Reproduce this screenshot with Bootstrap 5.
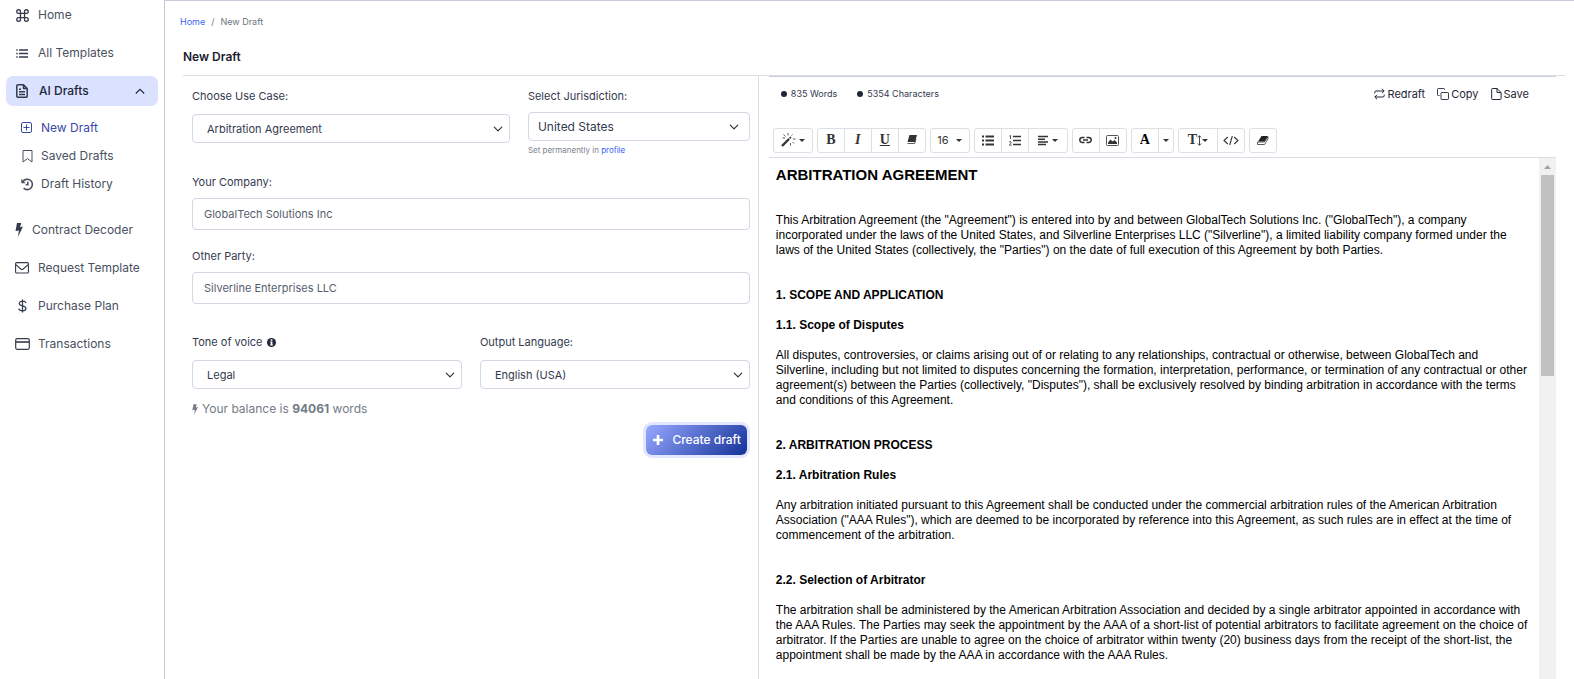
<!DOCTYPE html>
<html lang="en">
<head>
<meta charset="utf-8">
<meta name="viewport" content="width=device-width, initial-scale=1">
<title>New Draft</title>
<link href="https://cdn.jsdelivr.net/npm/bootstrap@5.3.0/dist/css/bootstrap.min.css" rel="stylesheet">
<style>
  :root { --line: #d3d7e2; --ink: #343a4f; --edge: #c6cbd8; }
  body { font-family: Inter, "Liberation Sans", sans-serif; font-size: 12px; line-height: 16px; color: var(--ink); background: #fff; }
  a { text-decoration: none; }
  svg { display: block; flex: none; }

  .side { width: 164px; flex: none; }
  .side a { color: #4a5060; font-size: 12px; line-height: 18px; height: 30px; padding: 0 9px; gap: 9px; border-radius: 7px; margin: 0 6px 8px; }
  .side a.current { background: #dbe2ff; color: #22263a; font-weight: 500; gap: 10px; }
  .side .sub { padding: 4px 0 13px; }
  .side .sub a { height: 20px; padding-left: 15px; gap: 8px; }
  .side .sub a.here { color: #3a49a8; }
  .side .glyph { width: 14px; display: flex; justify-content: center; color: #343b4d; }
  .side .sub .glyph { width: 12px; color: inherit; }
  .side .glyph.slim { width: 8px; }

  .work { border-left: 1px solid var(--edge); border-top: 1px solid var(--edge); padding: 0 9px 0 18px; min-width: 0; }
  .crumbs { font-size: 9px; line-height: 14px; padding-top: 14px; margin: 0 0 20px -3px; --bs-breadcrumb-item-padding-x: 6px; --bs-breadcrumb-divider-color: #6c757d; }
  .crumbs .breadcrumb-item.active { color: #6c757d; }
  .crumbs a, .tip a { color: #3d63f5; }
  .title { font-size: 12px; font-weight: 600; line-height: 16px; color: #1c2030; margin: 0 0 10px; }
  .panes { border-top: 1px solid #dcdee5; --bs-gutter-x: 0; min-height: 0; }
  .form-pane { border-right: 1px solid #dcdee5; padding: 12px 8px 0 9px; }
  .form-pane .row { --bs-gutter-x: 18px; }
  .form-pane label { font-size: 11px; line-height: 16px; margin-bottom: 8px; display: block; }
  .form-pane .roomy label { margin-bottom: 10px; }
  .form-pane .form-control { font-size: 11px; line-height: 16px; height: 32px; padding: 0 11px; border-color: var(--line); border-radius: 4px; color: #56606c; }
  .form-pane .form-select { font-size: 11px; line-height: 16px; height: 29px; padding: 0 30px 0 14px; border-color: var(--line); border-radius: 4px; color: var(--ink); background-size: 10px 10px; background-position: right 6px center; }
  .form-pane .wide-text { font-size: 12px; padding-left: 9px; background-position: right 10px center; }
  .field { padding-top: 18px; }
  .options { padding-top: 30px; }
  .tip { font-size: 8px; line-height: 12px; color: #7b828c; margin-top: 3px; }
  .balance { font-size: 12px; color: #747b86; }
  .create { font-size: 12px; font-weight: 500; line-height: 16px; height: 30px; padding: 0 6px; margin-right: 3px; color: #fff; border: 0; border-radius: 6px; background: linear-gradient(135deg, #97a8ff, #14329a); box-shadow: 0 0 0 3px #e3e6ff; }

  .edit-pane { padding: 0 9px 0 10px; min-height: 0; }
  .status { border-top: 1px solid #c9cfdd; padding: 9px 27px 0 12px; height: 53px; }
  .count { font-size: 9px; line-height: 16px; }
  .dot { width: 6px; height: 6px; border-radius: 50%; background: #1f2638; }
  .act { font-size: 11px; line-height: 16px; color: #1f2638; background: none; border: 0; padding: 0; gap: 2px; }
  .tools { gap: 4px; padding: 0 4px 4px; border-bottom: 1px solid #dcdee5; }
  .tools .btn { height: 25px; min-width: 28px; padding: 0 5px; font-size: 11px; line-height: 16px; color: #333; border: 1px solid #dae0e5; border-radius: 3px; display: flex; align-items: center; justify-content: center; gap: 3px; }
  .tools .serif { font-family: "Liberation Serif", serif; font-size: 14px; font-weight: 700; }
  .tools .w40 { width: 40px; }
  .tools .narrow { min-width: 15px; padding: 0 4px; }
  .caret { width: 0; height: 0; border: 3px solid transparent; border-top-color: #333; border-bottom: 0; }

  .doc { font-family: "Liberation Sans", Arial, sans-serif; font-size: 12px; line-height: 15px; color: #000; padding: 8px 8px 0 7px; overflow: hidden; }
  .doc h2 { font-size: 15px; font-weight: 700; line-height: 18px; margin: 0 0 29px; }
  .doc h3, .doc h4 { font-size: 12px; font-weight: 700; line-height: 15px; margin: 0 0 15px; }
  .doc p { margin: 0 0 30px; }
  .track { width: 17px; flex: none; background: #f1f1f1; }
  .thumb { width: 13px; height: 201px; background: #c1c1c1; }
</style>
</head>
<body class="d-flex vh-100 overflow-hidden">

<nav class="side d-flex flex-column" aria-label="Main">
  <a href="#" class="d-flex align-items-center">
    <span class="glyph"><svg width="13" height="13" viewBox="0 0 16 16" fill="none" stroke="currentColor" stroke-width="1.6"><path d="M5.5 5.5V3.2a2.3 2.3 0 1 0-2.3 2.3h9.6a2.3 2.3 0 1 0-2.3-2.3v9.6a2.3 2.3 0 1 0 2.3-2.3H3.2a2.3 2.3 0 1 0 2.3 2.3z"/></svg></span>Home</a>
  <a href="#" class="d-flex align-items-center">
    <span class="glyph"><svg width="12" height="13" viewBox="0 0 12 13" stroke="currentColor" stroke-width="1.3"><path d="M3 3h9M3 6.500h9M3 10h9M.3 3h1.400M.3 6.500h1.400M.3 10h1.400"/></svg></span>All Templates</a>
  <a href="#" class="current d-flex align-items-center" aria-expanded="true">
    <span class="glyph"><svg width="12" height="14" viewBox="0 0 12 14" fill="none" stroke="currentColor" stroke-width="1.5" stroke-linejoin="round"><path d="M7.5.8H2A1.2 1.2 0 0 0 .8 2v10A1.2 1.2 0 0 0 2 13.2h8a1.2 1.2 0 0 0 1.2-1.2V4.5zM7.5.8v3.7h3.7M3 5.3h2M3 7.8h6M3 10.4h6"/></svg></span>AI Drafts
    <svg class="ms-auto me-1" width="10" height="7" viewBox="0 0 10 7" fill="none" stroke="currentColor" stroke-width="1.1"><path d="M.8 5.500 5 1.300l4.200 4.200"/></svg></a>
  <div class="sub">
    <a href="#" class="here d-flex align-items-center">
      <span class="glyph"><svg width="12" height="12" viewBox="0 0 12 12" fill="none" stroke="currentColor"><rect x=".5" y=".5" width="10" height="10" rx="1.500"/><path d="M5.500 2.500v6M2.500 5.500h6"/></svg></span>New Draft</a>
    <a href="#" class="d-flex align-items-center">
      <span class="glyph"><svg width="11" height="13" viewBox="0 0 11 13" fill="none" stroke="currentColor"><path d="M1 .5h9v11.500L5.500 8.600 1 12z"/></svg></span>Saved Drafts</a>
    <a href="#" class="d-flex align-items-center">
      <span class="glyph"><svg width="13" height="13" viewBox="0 0 13 13" fill="none" stroke="currentColor" stroke-width="1.600"><path d="M1.700 3.800A5.200 5.200 0 1 1 2.600 10.200M6.800 3.800v3H4.700"/><path d="M.3.800v4.400h4.400z" fill="currentColor" stroke="none"/></svg></span>Draft History</a>
  </div>
  <a href="#" class="d-flex align-items-center">
    <span class="glyph slim"><svg width="8" height="14" viewBox="0 0 8 14" fill="currentColor"><path d="M2 0h4.300L5 4.200l3-.6L2.900 14l1-6.600L.5 8z"/></svg></span>Contract Decoder</a>
  <a href="#" class="d-flex align-items-center">
    <span class="glyph"><svg width="14" height="12" viewBox="0 0 14 12" fill="none" stroke="currentColor" stroke-width="1.100"><rect x=".6" y=".6" width="12.800" height="10.400" rx="1"/><path d="M.8 2.600 5.800 7q1.200 1 2.400 0l5-4.400"/></svg></span>Request Template</a>
  <a href="#" class="d-flex align-items-center">
    <span class="glyph"><svg width="9" height="14" viewBox="0 0 10 16" fill="none" stroke="currentColor" stroke-width="1.400"><path d="M5 .5v15M9 4.500C8.500 3 7 2.400 5 2.400S1.300 3.300 1.300 5c0 3.800 7.600 1.800 7.600 5.800 0 1.700-1.600 2.700-3.900 2.700S1.200 12.700.8 11"/></svg></span>Purchase Plan</a>
  <a href="#" class="d-flex align-items-center">
    <span class="glyph"><svg width="15" height="12" viewBox="0 0 15 12" fill="none" stroke="currentColor" stroke-width="1.200"><rect x=".7" y=".7" width="13.600" height="10.600" rx="1.500"/><path d="M.7 4h13.600" stroke-width="1.600"/></svg></span>Transactions</a>
</nav>

<main class="work d-flex flex-column flex-grow-1">
  <nav aria-label="Breadcrumb">
    <ol class="breadcrumb crumbs">
      <li class="breadcrumb-item"><a href="#">Home</a></li>
      <li class="breadcrumb-item active" aria-current="page">New Draft</li>
    </ol>
  </nav>
  <h1 class="title">New Draft</h1>

  <div class="panes row flex-grow-1">
    <form class="form-pane col-5">
      <div class="row">
        <div class="col-7 roomy">
          <label for="usecase">Choose Use Case:</label>
          <select id="usecase" class="form-select"><option>Arbitration Agreement</option></select>
        </div>
        <div class="col-5">
          <label for="jur">Select Jurisdiction:</label>
          <select id="jur" class="form-select wide-text"><option>United States</option></select>
          <div class="tip">Set permanently in <a href="#">profile</a></div>
        </div>
      </div>
      <div class="field">
        <label for="company">Your Company:</label>
        <input id="company" class="form-control" value="GlobalTech Solutions Inc">
      </div>
      <div class="field">
        <label for="party">Other Party:</label>
        <input id="party" class="form-control" value="Silverline Enterprises LLC">
      </div>
      <div class="row options roomy">
        <div class="col-6">
          <label for="tone" class="d-flex align-items-center">Tone of voice<svg class="ms-1" width="9" height="9" viewBox="0 0 10 10"><circle cx="5" cy="5" r="5" fill="#22283b"/><path d="M4 1.500h2v1.500H4zM3.500 4H6v3.200h.6v1H3.500v-1h.6V5h-.6z" fill="#fff"/></svg></label>
          <select id="tone" class="form-select"><option>Legal</option></select>
        </div>
        <div class="col-6">
          <label for="lang">Output Language:</label>
          <select id="lang" class="form-select"><option>English (USA)</option></select>
        </div>
      </div>
      <div class="balance d-flex align-items-center gap-1 mt-2 pt-1">
        <svg width="6" height="11" viewBox="0 0 8 14" fill="currentColor"><path d="M2 0h4.300L5 4.200l3-.6L2.900 14l1-6.600L.5 8z"/></svg>
        <span>Your balance is <b>94061</b> words</span>
      </div>
      <div class="d-flex justify-content-end mt-2">
        <button type="button" class="create d-flex align-items-center gap-2">
          <svg width="12" height="12" viewBox="0 0 12 12" stroke="#fff" stroke-width="2.600"><path d="M6 1v10M1 6h10"/></svg>Create draft</button>
      </div>
    </form>

    <section class="edit-pane col-7 d-flex flex-column h-100">
      <div class="status d-flex justify-content-between align-items-start">
        <div class="d-flex count">
          <span class="d-flex align-items-center gap-1 me-3 pe-1"><i class="dot"></i>835 Words</span>
          <span class="d-flex align-items-center gap-1"><i class="dot"></i>5354 Characters</span>
        </div>
        <div class="d-flex gap-2">
          <button type="button" class="act d-flex align-items-center me-1"><svg width="11" height="12" viewBox="0 0 11 12" fill="none" stroke="currentColor"><path d="M.8 5.500V4.200q0-1.200 1.200-1.200h8M8 .8 10.200 3 8 5.200M10.200 6.500v1.300q0 1.200-1.200 1.200H1M3 6.800.8 9 3 11.200"/></svg>Redraft</button>
          <button type="button" class="act d-flex align-items-center me-1"><svg width="12" height="12" viewBox="0 0 12 12" fill="none" stroke="currentColor" stroke-width=".9"><path d="M2.500 7.500H1.200Q.5 7.500.5 6.700V1.300Q.5.500 1.300.500h5.400q.8 0 .8.800V2"/><rect x="4" y="4.500" width="7.500" height="7" rx=".8"/></svg>Copy</button>
          <button type="button" class="act d-flex align-items-center"><svg width="11" height="12" viewBox="0 0 11 12" fill="none" stroke="currentColor"><path d="M6 .5H1.500q-.8 0-.8.8v9.400q0 .8.8.8h7.800q.8 0 .8-.8V4.500zM6 .5v4h4.100"/></svg>Save</button>
        </div>
      </div>

      <div class="tools d-flex flex-wrap" role="toolbar" aria-label="Formatting">
        <button type="button" class="btn w40" aria-label="Style"><svg width="15" height="14" viewBox="0 0 15 14" stroke="#333"><path d="M1 13 8 6" stroke-width="2.400"/><path d="M8.500 5.500 10 4" stroke-width="1.600"/><path d="M7 0v2.500M2.500 1.500 4.500 3.500M11.500 1.500 10.500 2.500M12 6h2.500M11.500 9l1.500 1.500M9.500 10v2.500M1.500 5H4" stroke-width=".8"/></svg><i class="caret"></i></button>
        <div class="btn-group">
          <button type="button" class="btn serif">B</button>
          <button type="button" class="btn serif fst-italic">I</button>
          <button type="button" class="btn serif text-decoration-underline">U</button>
          <button type="button" class="btn" aria-label="Clear formatting"><svg width="10" height="10" viewBox="0 0 10 10"><path d="M2.500 0H10L8 7H.5z" fill="#333"/><path d="M.4 8.500H7.700L9 4" fill="none" stroke="#333" stroke-width=".8"/></svg></button>
        </div>
        <button type="button" class="btn w40 gap-2">16 <i class="caret"></i></button>
        <div class="btn-group">
          <button type="button" class="btn" aria-label="Bulleted list"><svg width="12" height="11" viewBox="0 0 12 11" stroke="#333" stroke-width="1.900"><path d="M3.500 1.500H12M3.500 5.500H12M3.500 9.500H12M0 1.500h2M0 5.500h2M0 9.500h2"/></svg></button>
          <button type="button" class="btn" aria-label="Numbered list"><svg width="12" height="11" viewBox="0 0 12 11" fill="none" stroke="#333"><path d="M4 1.500h8M4 5.500h8M4 9.500h8" stroke-width="1.700"/><path d="M.3 1.200 1.500.5V4M0 7.200q1.200-1.400 2.200-.2Q2.500 7.800.4 10.200h2.200" stroke-width=".8"/></svg></button>
          <button type="button" class="btn w40" aria-label="Paragraph"><svg width="11" height="11" viewBox="0 0 11 11" stroke="#333" stroke-width="1.500"><path d="M0 1.500h10M0 4.200h7M0 6.900h10M0 9.600h8"/></svg><i class="caret"></i></button>
        </div>
        <div class="btn-group">
          <button type="button" class="btn" aria-label="Link"><svg width="13" height="8" viewBox="0 0 13 8" fill="none" stroke="#333" stroke-width="1.500"><path d="M5.500 1.500H3.300a2.500 2.500 0 0 0 0 5H5.500M7.500 1.500h2.200a2.500 2.500 0 0 1 0 5H7.500M4 4h5"/></svg></button>
          <button type="button" class="btn" aria-label="Picture"><svg width="13" height="11" viewBox="0 0 13 11"><rect x=".5" y=".5" width="12" height="10" rx="1" fill="none" stroke="#555"/><path d="M2 9V7.500L4.500 4.500l2 2 2-1.500L11 7.500V9z" fill="#333"/><circle cx="9.500" cy="3" r="1" fill="#333"/></svg></button>
        </div>
        <div class="btn-group">
          <button type="button" class="btn serif text-black">A</button>
          <button type="button" class="btn narrow" aria-label="More colours"><i class="caret"></i></button>
        </div>
        <div class="btn-group">
          <button type="button" class="btn serif w40 gap-0">T<svg width="5" height="11" viewBox="0 0 5 11" fill="none" stroke="#333" stroke-width=".9"><path d="M2.500.8v9.400M.8 2.500 2.500.7l1.700 1.800M.8 8.500l1.700 1.800 1.700-1.800"/></svg><i class="caret"></i></button>
          <button type="button" class="btn" aria-label="Code view"><svg width="16" height="9" viewBox="0 0 16 9" fill="none" stroke="#333" stroke-width="1.100"><path d="M4.800 1 1 4.500 4.800 8M11.200 1 15 4.500 11.200 8M9.300 0 6.700 9"/></svg></button>
        </div>
        <button type="button" class="btn" aria-label="Eraser"><svg width="13" height="9" viewBox="0 0 13 9"><path d="M5.500 0H12L8.500 5.500H2z" fill="#222"/><path d="M1.600 6h6.600L12 .8v2L8.500 8.500h-7z" fill="none" stroke="#333" stroke-width=".8"/></svg></button>
      </div>

      <div class="d-flex flex-grow-1 overflow-hidden">
        <article class="doc flex-grow-1">
          <h2>ARBITRATION AGREEMENT</h2>
          <p>This Arbitration Agreement (the "Agreement") is entered into by and between GlobalTech Solutions Inc. ("GlobalTech"), a company incorporated under the laws of the United States, and Silverline Enterprises LLC ("Silverline"), a limited liability company formed under the laws of the United States (collectively, the "Parties") on the date of full execution of this Agreement by both Parties.</p>
          <h3>1. SCOPE AND APPLICATION</h3>
          <h4>1.1. Scope of Disputes</h4>
          <p>All disputes, controversies, or claims arising out of or relating to any relationships, contractual or otherwise, between GlobalTech and Silverline, including but not limited to disputes concerning the formation, interpretation, performance, or termination of any contractual or other agreement(s) between the Parties (collectively, "Disputes"), shall be exclusively resolved by binding arbitration in accordance with the terms and conditions of this Agreement.</p>
          <h3>2. ARBITRATION PROCESS</h3>
          <h4>2.1. Arbitration Rules</h4>
          <p>Any arbitration initiated pursuant to this Agreement shall be conducted under the commercial arbitration rules of the American Arbitration Association ("AAA Rules"), which are deemed to be incorporated by reference into this Agreement, as such rules are in effect at the time of commencement of the arbitration.</p>
          <h4>2.2. Selection of Arbitrator</h4>
          <p>The arbitration shall be administered by the American Arbitration Association and decided by a single arbitrator appointed in accordance with the AAA Rules. The Parties may seek the appointment by the AAA of a short-list of potential arbitrators to facilitate agreement on the choice of arbitrator. If the Parties are unable to agree on the choice of arbitrator within twenty (20) business days from the receipt of the short-list, the appointment shall be made by the AAA in accordance with the AAA Rules.</p>
        </article>
        <div class="track d-flex flex-column align-items-center" aria-hidden="true">
          <svg width="17" height="17" viewBox="0 0 17 17"><path d="M5 11h7L8.500 7z" fill="#a3a3a3"/></svg>
          <div class="thumb"></div>
        </div>
      </div>
    </section>
  </div>
</main>

<script src="https://cdn.jsdelivr.net/npm/bootstrap@5.3.0/dist/js/bootstrap.bundle.min.js"></script>
</body>
</html>
